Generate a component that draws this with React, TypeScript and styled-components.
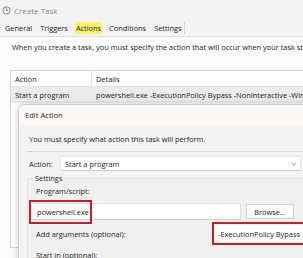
import styled, { createGlobalStyle } from "styled-components";

const GlobalStyle = createGlobalStyle`
    html, body {
        margin: 0;
        padding: 0;
        background: #f3f3f3;
    }
    * {
        box-sizing: border-box;
    }
`;

const StyledWindow = styled.div`
    position: relative;
    width: 303px;
    height: 258px;
    overflow: hidden;
    background: #f3f3f3;
    font-family: "Open Sans", "Noto Sans", sans-serif;
    font-size: 7.4px;
    color: #1c1c1c;
`;

const StyledTitleBar = styled.div`
    display: flex;
    align-items: center;
    gap: 3px;
    height: 20px;
    padding-left: 2px;
    color: #8a8a8a;
    font-size: 8px;
`;

const StyledTabBar = styled.div`
    display: flex;
    align-items: center;
    gap: 6px;
    height: 17px;
    padding-left: 4px;
    border-bottom: 1px solid #e0e0e0;
`;

const StyledTab = styled.span<{ $active?: boolean; $last?: boolean }>`
    height: 12px;
    line-height: 12px;
    padding: 0 ${(p) => (p.$last ? "2px" : "1px")} 0 1px;
    background: ${(p) => (p.$active ? "#f7f76a" : "transparent")};
    border-right: ${(p) => (p.$last ? "1px solid #d8d8d8" : "none")};
`;

const StyledContent = styled.div`
    height: 221px;
    padding: 4px 0 0 10px;
    background: #fcfcfc;
`;

const StyledDescription = styled.div`
    height: 12px;
    line-height: 12px;
    padding-left: 2px;
    white-space: nowrap;
    overflow: hidden;
`;

const StyledTable = styled.div`
    margin-top: 17px;
    border: 1px solid #d6d6d6;
    border-right: none;
    background: #fff;
    height: 178px;
`;

const StyledTableRow = styled.div<{ $selected?: boolean }>`
    display: grid;
    grid-template-columns: 81px 1fr;
    height: 16px;
    line-height: 16px;
    background: ${(p) => (p.$selected ? "#ebebeb" : "#fff")};
    border-bottom: 1px solid ${(p) => (p.$selected ? "#ebebeb" : "#e2e2e2")};
    white-space: nowrap;
    overflow: hidden;
`;

const StyledCell = styled.div<{ $divider?: boolean }>`
    padding-left: 4px;
    border-right: ${(p) => (p.$divider ? "1px solid #e4e4e4" : "none")};
    overflow: hidden;
`;

const StyledDialog = styled.div`
    position: absolute;
    left: 18px;
    top: 104px;
    right: -10px;
    bottom: -10px;
    border: 1px solid #cfcfcf;
    border-radius: 7px 0 0 0;
    background: #f3f3f3;
    box-shadow: 0 0 6px rgba(0, 0, 0, 0.22);
    overflow: hidden;
`;

const StyledDialogTitle = styled.div`
    display: flex;
    align-items: center;
    height: 20px;
    padding-left: 6px;
    background: #fcf8f5;
    font-size: 7.6px;
`;

const StyledDialogBody = styled.div`
    padding: 8px 0 0 8px;
`;

const StyledPrompt = styled.div`
    height: 12px;
    line-height: 12px;
    padding-left: 2px;
`;

const StyledSeparator = styled.div`
    margin-top: 6px;
    border-top: 1px solid #d8d8d8;
`;

const StyledActionRow = styled.div`
    display: flex;
    align-items: center;
    margin-top: 4px;
    height: 15px;
    padding-left: 2px;
    padding-right: 11px;
`;

const StyledFieldLabel = styled.span`
    width: 31px;
`;

const StyledSelect = styled.div`
    display: flex;
    align-items: center;
    justify-content: space-between;
    flex: 1;
    height: 15px;
    padding: 0 3px 0 4px;
    background: #fff;
    border: 1px solid #e6e6e6;
    border-bottom-color: #d0d0d0;
`;

const StyledGroup = styled.fieldset`
    margin: 2px 0 0 0;
    padding: 3px 0 0 3px;
    border: 1px solid #e1e1e1;
    border-right: none;
    background: #f0f0f0;
    min-width: 0;
`;

const StyledLegend = styled.legend`
    padding: 0 2px;
    margin-left: 2px;
    line-height: 10px;
`;

const StyledLabel = styled.div`
    height: 11px;
    line-height: 11px;
    padding-left: 5px;
`;

const StyledProgramRow = styled.div`
    display: flex;
    align-items: center;
    gap: 5px;
    margin-top: 6px;
    height: 17px;
    padding-right: 18px;
`;

const StyledInput = styled.div`
    position: relative;
    display: flex;
    align-items: center;
    flex: 1;
    height: 17px;
    padding-left: 5px;
    background: #fff;
    border: 1px solid #e4e4e4;
    border-bottom-color: #cfcfcf;
    white-space: nowrap;
`;

const StyledMark = styled.span<{ $width: number }>`
    position: absolute;
    left: -3px;
    top: -4px;
    width: ${(p) => p.$width}px;
    height: 24px;
    border: 2px solid #c3202c;
`;

const StyledButton = styled.div`
    display: flex;
    align-items: center;
    justify-content: center;
    width: 48px;
    height: 15px;
    background: #fdfdfd;
    border: 1px solid #d2d2d2;
`;

const StyledArgsRow = styled.div`
    display: flex;
    align-items: center;
    height: 23px;
    margin-top: 2px;
`;

const StyledArgsLabel = styled.span`
    flex: 1;
    padding-left: 5px;
`;

const StyledArgsBox = styled.div`
    width: 99px;
    height: 23px;
    margin-right: 1px;
    border: 2px solid #c3202c;
    padding: 1px;
`;

const StyledArgsInput = styled.div`
    display: flex;
    align-items: center;
    height: 100%;
    padding-left: 3px;
    background: #fff;
    white-space: nowrap;
    overflow: hidden;
`;

const StyledStartIn = styled.div`
    height: 14px;
    line-height: 14px;
    margin-top: 3px;
    padding-left: 5px;
`;

function ClockIcon() {
    return (
        <svg width="9" height="9" viewBox="0 0 16 16">
            <circle cx="8" cy="8" r="6.5" fill="#ececec" stroke="#808080" strokeWidth="1.6" />
            <path d="M8 4.2V8h3" fill="none" stroke="#808080" strokeWidth="1.6" />
        </svg>
    );
}

function Chevron() {
    return (
        <svg width="6" height="4" viewBox="0 0 10 6">
            <path d="M1 1l4 4 4-4" fill="none" stroke="#777" strokeWidth="1.2" />
        </svg>
    );
}

const tabs = ["General", "Triggers", "Actions", "Conditions", "Settings"];

function App() {
    return (
        <StyledWindow>
            <GlobalStyle />
            <StyledTitleBar>
                <ClockIcon />
                <span>Create Task</span>
            </StyledTitleBar>
            <StyledTabBar>
                {tabs.map((tab, index) => (
                    <StyledTab key={tab} $active={tab === "Actions"} $last={index === tabs.length - 1}>
                        {tab}
                    </StyledTab>
                ))}
            </StyledTabBar>
            <StyledContent>
                <StyledDescription>When you create a task, you must specify the action that will occur when your task starts.</StyledDescription>
                <StyledTable>
                    <StyledTableRow>
                        <StyledCell $divider>Action</StyledCell>
                        <StyledCell>Details</StyledCell>
                    </StyledTableRow>
                    <StyledTableRow $selected>
                        <StyledCell>Start a program</StyledCell>
                        <StyledCell>powershell.exe -ExecutionPolicy Bypass -NonInteractive -WindowStyle Hidden</StyledCell>
                    </StyledTableRow>
                </StyledTable>
            </StyledContent>
            <StyledDialog>
                <StyledDialogTitle>Edit Action</StyledDialogTitle>
                <StyledDialogBody>
                    <StyledPrompt>You must specify what action this task will perform.</StyledPrompt>
                    <StyledSeparator />
                    <StyledActionRow>
                        <StyledFieldLabel>Action:</StyledFieldLabel>
                        <StyledSelect>
                            <span>Start a program</span>
                            <Chevron />
                        </StyledSelect>
                    </StyledActionRow>
                    <StyledGroup>
                        <StyledLegend>Settings</StyledLegend>
                        <StyledLabel>Program/script:</StyledLabel>
                        <StyledProgramRow>
                            <StyledInput>
                                powershell.exe
                                <StyledMark $width={63} />
                            </StyledInput>
                            <StyledButton>Browse...</StyledButton>
                        </StyledProgramRow>
                        <StyledArgsRow>
                            <StyledArgsLabel>Add arguments (optional):</StyledArgsLabel>
                            <StyledArgsBox>
                                <StyledArgsInput>-ExecutionPolicy Bypass</StyledArgsInput>
                            </StyledArgsBox>
                        </StyledArgsRow>
                        <StyledStartIn>Start in (optional):</StyledStartIn>
                    </StyledGroup>
                </StyledDialogBody>
            </StyledDialog>
        </StyledWindow>
    );
}

export default App;
